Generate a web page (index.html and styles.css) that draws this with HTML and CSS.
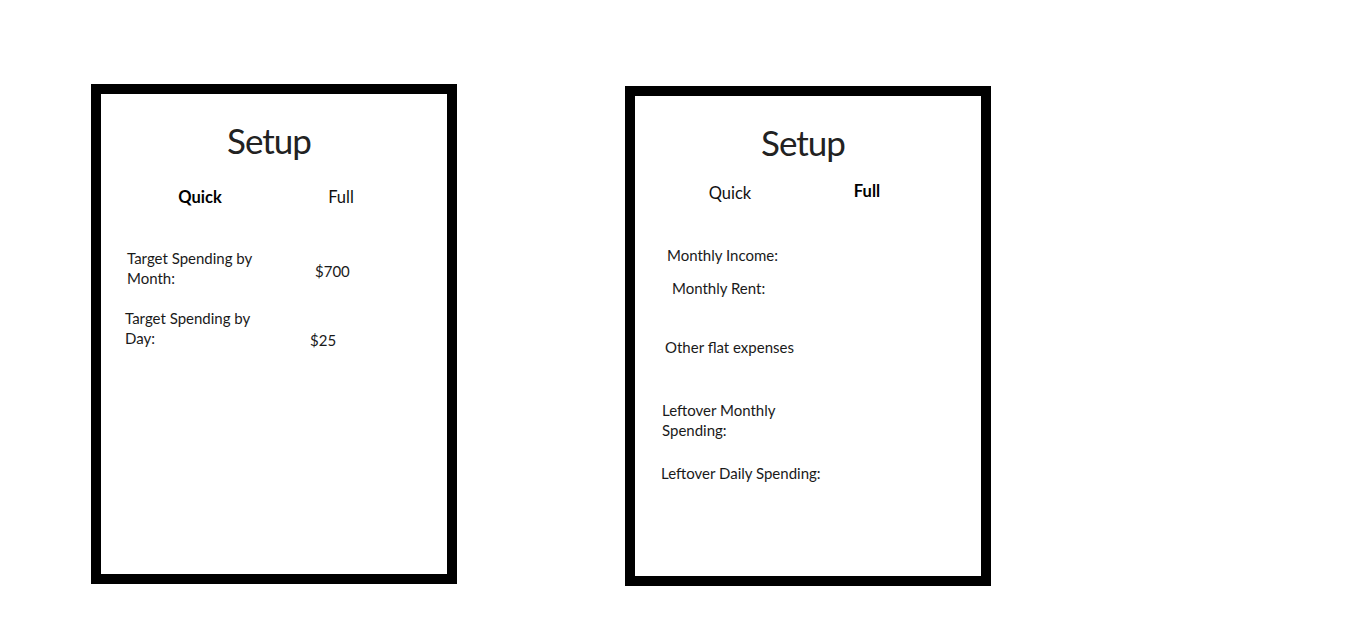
FILE: index.html
```html
<!DOCTYPE html>
<html lang="en">
<head>
<meta charset="utf-8">
<title>Setup</title>
<link rel="stylesheet" href="styles.css">
</head>
<body>
<main class="page">
  <section class="card card--quick">
    <h1 class="title">Setup</h1>
    <div class="tabs tabs--quick">
      <span class="tab tab--active">Quick</span>
      <span class="tab">Full</span>
    </div>
    <div class="row row--month">
      <span class="label label--month">Target Spending by Month:</span>
      <span class="value value--month">$700</span>
    </div>
    <div class="row row--day">
      <span class="label label--day">Target Spending by Day:</span>
      <span class="value value--day">$25</span>
    </div>
  </section>

  <section class="card card--full">
    <h1 class="title">Setup</h1>
    <div class="tabs tabs--full">
      <span class="tab tab--low">Quick</span>
      <span class="tab tab--active">Full</span>
    </div>
    <p class="field field--income">Monthly Income:</p>
    <p class="field field--rent">Monthly Rent:</p>
    <p class="field field--other">Other flat expenses</p>
    <p class="field field--leftover-month">Leftover Monthly Spending:</p>
    <p class="field field--leftover-day">Leftover Daily Spending:</p>
  </section>
</main>
</body>
</html>
```

FILE: styles.css
```css
html, body {
  margin: 0;
  padding: 0;
  background: #ffffff;
}

body {
  font-family: "Lato", "Open Sans", sans-serif;
  color: #1a1a1a;
}

.page {
  display: flex;
  align-items: flex-start;
  gap: 168px;
  padding: 84px 0 0 91px;
}

.card {
  width: 346px;
  height: 480px;
  border: 10px solid #000000;
  background: #ffffff;
  display: flex;
  flex-direction: column;
  align-items: flex-start;
}

.card--full {
  margin-top: 2px;
}

.title {
  align-self: stretch;
  margin: 26px 10px 0 0;
  font-size: 35px;
  line-height: 40px;
  letter-spacing: -1px;
  font-weight: 400;
  text-align: center;
  color: #222222;
}

.tabs {
  display: flex;
  align-items: flex-start;
  font-size: 16.5px;
  line-height: 20px;
}

.tabs--quick {
  margin-top: 27px;
  padding-left: 49px;
  gap: 41px;
}

.tabs--full {
  margin-top: 19px;
  padding-left: 45px;
  gap: 37px;
}

.tab {
  width: 100px;
  text-align: center;
  color: #111111;
}

.tab--active {
  font-weight: 700;
  color: #000000;
}

.tab--low {
  margin-top: 2px;
}

.row {
  display: flex;
  align-items: flex-start;
  font-size: 15px;
  line-height: 20px;
}

.row--month {
  margin-top: 41px;
  padding-left: 26px;
}

.row--day {
  margin-top: 20px;
  padding-left: 24px;
}

.label {
  width: 150px;
}

.value--month {
  margin: 13px 0 0 38px;
}

.value--day {
  margin: 22px 0 0 35px;
}

.field {
  margin: 0;
  font-size: 15px;
  line-height: 20px;
}

.field--income {
  margin: 42px 0 0 32px;
}

.field--rent {
  margin: 13px 0 0 37px;
}

.field--other {
  margin: 39px 0 0 30px;
}

.field--leftover-month {
  margin: 43px 0 0 27px;
  width: 135px;
}

.field--leftover-day {
  margin: 23px 0 0 26px;
}
```
